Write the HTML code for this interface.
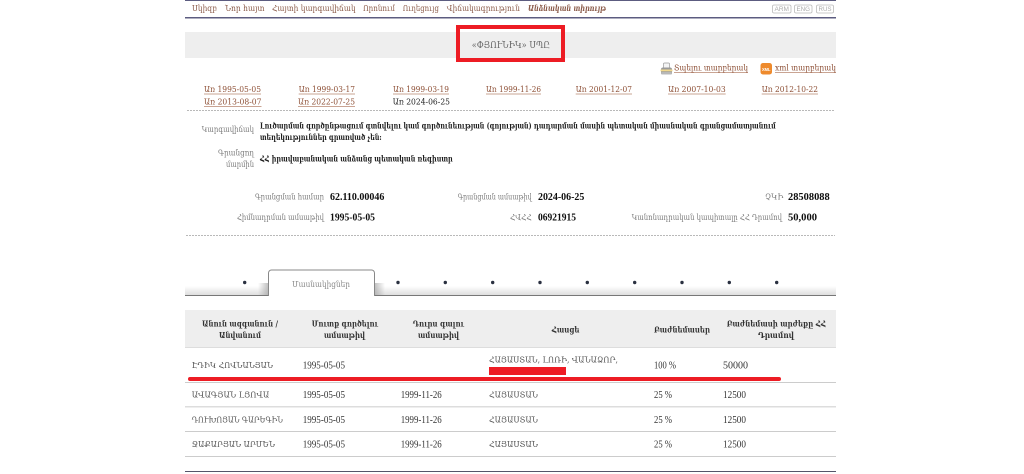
<!DOCTYPE html>
<html lang="hy"><head><meta charset="utf-8"><title>ՓՅՈՒՆԻԿ ՍՊԸ</title>
<style>
html,body{margin:0;padding:0;background:#fff;width:1024px;height:474px;overflow:hidden}
svg{display:block}
text{font-family:"DejaVu Serif","Liberation Serif",serif;font-size:8.5px;fill:#222}
.n{fill:#8a5a48}.l{fill:#8d4f35}.g{fill:#7b7b7b}.b{font-weight:bold;fill:#1d1d1d}
.d{font-family:"Liberation Serif",serif;font-size:10px;fill:#333}
.v{font-family:"Liberation Serif",serif;font-weight:bold;font-size:10.5px;fill:#111}
.h{font-weight:bold;fill:#333}.c{fill:#555}
.s{font-family:"Liberation Sans",sans-serif;font-size:6px;fill:#aaa}
</style></head><body>
<svg width="1024" height="474" viewBox="0 0 1024 474" xmlns="http://www.w3.org/2000/svg">
<defs>
<linearGradient id="st" x1="0" y1="0" x2="0" y2="1"><stop offset="0" stop-color="#fff"/><stop offset="1" stop-color="#dedede"/></linearGradient>
<linearGradient id="sl" x1="0" y1="0" x2="1" y2="0"><stop offset="0" stop-color="#999" stop-opacity="0"/><stop offset="1" stop-color="#999" stop-opacity=".6"/></linearGradient>
<linearGradient id="sr" x1="0" y1="0" x2="1" y2="0"><stop offset="0" stop-color="#999" stop-opacity=".6"/><stop offset="1" stop-color="#999" stop-opacity="0"/></linearGradient>
<filter id="bl" x="0" y="0" width="100%" height="100%"><feGaussianBlur stdDeviation="0.3"/></filter>
</defs>
<rect x="185" y="0" width="651" height="1" fill="#5c5c80"/>
<rect x="185" y="17" width="651" height="1.5" fill="#5c5c80"/>
<rect x="185" y="32" width="651" height="26" fill="#eee"/>

<g fill="none" stroke="#bbb" stroke-width="0.8">
<rect x="772.5" y="5" width="18.5" height="8" rx="1.5"/><rect x="794.5" y="5" width="17.5" height="8" rx="1.5"/><rect x="816.5" y="5" width="17" height="8" rx="1.5"/>
</g>

<g stroke="#b9b9b9" stroke-width="1" stroke-dasharray="2 1">
<line x1="187" y1="110.5" x2="835" y2="110.5"/><line x1="186" y1="235.5" x2="835" y2="235.5"/>
</g>

<!-- tab strip -->
<rect x="185" y="286" width="651" height="9" fill="url(#st)"/>
<rect x="258" y="283" width="10" height="12" fill="url(#sl)"/>
<rect x="375" y="283" width="10" height="12" fill="url(#sr)"/>
<rect x="185" y="295" width="651" height="1" fill="#777"/>
<path d="M268.5 296V273a3 3 0 0 1 3-3H371.5a3 3 0 0 1 3 3V296" fill="#fff" stroke="#888" stroke-width="1"/>
<g fill="#2a3040">
<circle cx="244.7" cy="282.5" r="1.7"/><circle cx="398" cy="282.5" r="1.7"/><circle cx="445.3" cy="282.5" r="1.7"/><circle cx="492.7" cy="282.5" r="1.7"/><circle cx="540" cy="282.5" r="1.7"/><circle cx="587.3" cy="282.5" r="1.7"/><circle cx="634.7" cy="282.5" r="1.7"/><circle cx="682" cy="282.5" r="1.7"/><circle cx="729.3" cy="282.5" r="1.7"/><circle cx="776.7" cy="282.5" r="1.7"/>
</g>

<!-- table -->
<rect x="185" y="310" width="651" height="37" fill="#eee"/>
<rect x="185" y="347" width="651" height="1" fill="#ddd"/>
<rect x="185" y="382" width="651" height="1" fill="#ccc"/>
<rect x="185" y="406" width="651" height="1.5" fill="#ddd"/>
<rect x="185" y="431" width="651" height="1" fill="#ccc"/>
<rect x="185" y="456" width="651" height="1" fill="#ccc"/>
<rect x="185" y="471" width="651" height="1" fill="#55556a"/>

<!-- printer icon -->
<path d="M663.5 68V64a1 1 0 0 1 1-1h4a1 1 0 0 1 1 1v4z" fill="#f4f4f4" stroke="#999" stroke-width="0.7"/>
<path d="M661 74V69.5Q661 67.5 663 67.5H670Q672 67.5 672 69.5V74z" fill="#9a9a9a"/>
<rect x="660.5" y="69.5" width="12" height="1.8" fill="#f2d98e"/>
<rect x="661" y="72" width="11" height="2.5" rx="1" fill="#b8b8b8"/>
<!-- xml icon -->
<rect x="760.5" y="63" width="11.5" height="11.5" rx="2.5" fill="#ee8a2c"/>
<text x="762" y="71" textLength="8.5" lengthAdjust="spacingAndGlyphs" style="font-family:'Liberation Sans',sans-serif;font-size:4.5px;font-weight:bold;fill:#fff">XML</text>

<!-- link underlines -->
<g fill="#c9a493">
<rect x="674" y="72" width="74" height="1"/><rect x="775" y="72" width="61" height="1"/>
<rect x="204" y="93.5" width="57" height="1"/><rect x="298.7" y="93.5" width="56.3" height="1"/><rect x="393" y="93.5" width="56" height="1"/><rect x="486" y="93.5" width="55" height="1"/><rect x="575.7" y="93.5" width="56.3" height="1"/><rect x="668" y="93.5" width="57.7" height="1"/><rect x="761.7" y="93.5" width="56.3" height="1"/>
<rect x="204" y="106" width="57.5" height="1"/><rect x="298" y="106" width="57" height="1"/>
</g>

<g filter="url(#bl)">
<!-- nav -->
<text class="n" x="192" y="11" textLength="25" lengthAdjust="spacingAndGlyphs">Սկիզբ</text>
<text class="n" x="225" y="11" textLength="39.5" lengthAdjust="spacingAndGlyphs">Նոր հայտ</text>
<text class="n" x="272" y="11" textLength="83.7" lengthAdjust="spacingAndGlyphs">Հայտի կարգավիճակ</text>
<text class="n" x="363" y="11" textLength="32" lengthAdjust="spacingAndGlyphs">Որոնում</text>
<text class="n" x="402.7" y="11" textLength="36.3" lengthAdjust="spacingAndGlyphs">Ուղեցույց</text>
<text class="n" x="446.7" y="11" textLength="73.3" lengthAdjust="spacingAndGlyphs">Վիճակագրություն</text>
<text class="n" x="528" y="11" textLength="78" lengthAdjust="spacingAndGlyphs" style="font-style:italic;font-weight:bold">Անձնական տիրույթ</text>
<text class="s" x="774.5" y="11" textLength="14.5" lengthAdjust="spacingAndGlyphs">ARM</text>
<text class="s" x="796.5" y="11" textLength="13.5" lengthAdjust="spacingAndGlyphs">ENG</text>
<text class="s" x="818.5" y="11" textLength="13" lengthAdjust="spacingAndGlyphs">RUS</text>

<text x="471.7" y="48" textLength="78.3" lengthAdjust="spacingAndGlyphs" style="fill:#666;font-size:9.5px">«ՓՅՈՒՆԻԿ» ՍՊԸ</text>

<text class="l" x="674" y="70.5" textLength="74" lengthAdjust="spacingAndGlyphs">Տպելու տարբերակ</text>
<text class="l" x="775" y="70.5" textLength="61" lengthAdjust="spacingAndGlyphs">xml տարբերակ</text>

<!-- dates -->
<text class="l" x="204" y="92" textLength="57" lengthAdjust="spacingAndGlyphs">Առ 1995-05-05</text>
<text class="l" x="298.7" y="92" textLength="56.3" lengthAdjust="spacingAndGlyphs">Առ 1999-03-17</text>
<text class="l" x="393" y="92" textLength="56" lengthAdjust="spacingAndGlyphs">Առ 1999-03-19</text>
<text class="l" x="486" y="92" textLength="55" lengthAdjust="spacingAndGlyphs">Առ 1999-11-26</text>
<text class="l" x="575.7" y="92" textLength="56.3" lengthAdjust="spacingAndGlyphs">Առ 2001-12-07</text>
<text class="l" x="668" y="92" textLength="57.7" lengthAdjust="spacingAndGlyphs">Առ 2007-10-03</text>
<text class="l" x="761.7" y="92" textLength="56.3" lengthAdjust="spacingAndGlyphs">Առ 2012-10-22</text>
<text class="l" x="204" y="104.5" textLength="57.5" lengthAdjust="spacingAndGlyphs">Առ 2013-08-07</text>
<text class="l" x="298" y="104.5" textLength="57" lengthAdjust="spacingAndGlyphs">Առ 2022-07-25</text>
<text x="392.7" y="104.5" textLength="57.3" lengthAdjust="spacingAndGlyphs">Առ 2024-06-25</text>

<!-- details -->
<text class="g" x="201.7" y="132" textLength="52.3" lengthAdjust="spacingAndGlyphs">Կարգավիճակ</text>
<text class="b" x="260" y="128.5" textLength="515.7" lengthAdjust="spacingAndGlyphs">Լուծարման գործընթացում գտնվելու կամ գործունեության (գոյության) դադարման մասին պետական միասնական գրանցամատյանում</text>
<text class="b" x="260" y="140" textLength="121.7" lengthAdjust="spacingAndGlyphs">տեղեկություններ գրառված չեն:</text>
<text class="g" x="218" y="155.7" textLength="36" lengthAdjust="spacingAndGlyphs">Գրանցող</text>
<text class="g" x="226" y="167" textLength="28" lengthAdjust="spacingAndGlyphs">մարմին</text>
<text class="b" x="260" y="161.3" textLength="192.7" lengthAdjust="spacingAndGlyphs">ՀՀ իրավաբանական անձանց պետական ռեգիստր</text>

<text class="g" x="255" y="199.7" textLength="69" lengthAdjust="spacingAndGlyphs">Գրանցման համար</text>
<text class="v" x="330" y="200" textLength="54.3" lengthAdjust="spacingAndGlyphs">62.110.00046</text>
<text class="g" x="457.7" y="199.7" textLength="74" lengthAdjust="spacingAndGlyphs">Գրանցման ամսաթիվ</text>
<text class="v" x="538" y="200" textLength="46.3" lengthAdjust="spacingAndGlyphs">2024-06-25</text>
<text class="g" x="765" y="199.7" textLength="18.3" lengthAdjust="spacingAndGlyphs">ՉԿԻ</text>
<text class="v" x="788" y="200" textLength="41.7" lengthAdjust="spacingAndGlyphs">28508088</text>

<text class="g" x="237" y="220" textLength="87" lengthAdjust="spacingAndGlyphs">Հիմնադրման ամսաթիվ</text>
<text class="v" x="330" y="220.5" textLength="45" lengthAdjust="spacingAndGlyphs">1995-05-05</text>
<text class="g" x="510" y="220" textLength="21.7" lengthAdjust="spacingAndGlyphs">ՀՎՀՀ</text>
<text class="v" x="538" y="220.5" textLength="38" lengthAdjust="spacingAndGlyphs">06921915</text>
<text class="g" x="631.7" y="220" textLength="150.3" lengthAdjust="spacingAndGlyphs">Կանոնադրական կապիտալը ՀՀ Դրամով</text>
<text class="v" x="788" y="220.5" textLength="29" lengthAdjust="spacingAndGlyphs">50,000</text>

<text x="292" y="287" textLength="58" lengthAdjust="spacingAndGlyphs" style="fill:#888">Մասնակիցներ</text>

<!-- table head -->
<text class="h" x="202" y="326.3" textLength="76" lengthAdjust="spacingAndGlyphs">Անուն ազգանուն /</text>
<text class="h" x="219" y="338" textLength="42" lengthAdjust="spacingAndGlyphs">Անվանում</text>
<text class="h" x="311.7" y="326.3" textLength="66.3" lengthAdjust="spacingAndGlyphs">Մուտք գործելու</text>
<text class="h" x="324" y="338" textLength="41" lengthAdjust="spacingAndGlyphs">ամսաթիվ</text>
<text class="h" x="412.7" y="326.3" textLength="51.3" lengthAdjust="spacingAndGlyphs">Դուրս գալու</text>
<text class="h" x="418" y="338" textLength="41" lengthAdjust="spacingAndGlyphs">ամսաթիվ</text>
<text class="h" x="551.7" y="332.7" textLength="27.8" lengthAdjust="spacingAndGlyphs">Հասցե</text>
<text class="h" x="654" y="332.7" textLength="56" lengthAdjust="spacingAndGlyphs">Բաժնեմասեր</text>
<text class="h" x="726.7" y="326.3" textLength="99.3" lengthAdjust="spacingAndGlyphs">Բաժնեմասի արժեքը ՀՀ</text>
<text class="h" x="758" y="338" textLength="36" lengthAdjust="spacingAndGlyphs">Դրամով</text>

<!-- rows -->
<text class="c" x="191.7" y="368" textLength="81.3" lengthAdjust="spacingAndGlyphs">ԷԴԻԿ ՀՈՎՆԱՆՅԱՆ</text>
<text class="d" x="302.7" y="368.5" textLength="42.3" lengthAdjust="spacingAndGlyphs">1995-05-05</text>
<text class="c" x="489" y="362.3" textLength="129" lengthAdjust="spacingAndGlyphs">ՀԱՅԱՍՏԱՆ, ԼՈՌԻ, ՎԱՆԱՁՈՐ,</text>
<text class="d" x="654" y="368.5" textLength="22" lengthAdjust="spacingAndGlyphs">100 %</text>
<text class="d" x="723" y="368.5" textLength="25" lengthAdjust="spacingAndGlyphs">50000</text>

<text class="c" x="191.7" y="397.7" textLength="77.6" lengthAdjust="spacingAndGlyphs">ԱՎԱԳՅԱՆ ԼՅՈՎԱ</text>
<text class="d" x="302.7" y="398" textLength="42.3" lengthAdjust="spacingAndGlyphs">1995-05-05</text>
<text class="d" x="400.7" y="398" textLength="41" lengthAdjust="spacingAndGlyphs">1999-11-26</text>
<text class="c" x="489" y="397.7" textLength="49" lengthAdjust="spacingAndGlyphs">ՀԱՅԱՍՏԱՆ</text>
<text class="d" x="654" y="398" textLength="18" lengthAdjust="spacingAndGlyphs">25 %</text>
<text class="d" x="723" y="398" textLength="23" lengthAdjust="spacingAndGlyphs">12500</text>

<text class="c" x="191.7" y="422.5" textLength="91.3" lengthAdjust="spacingAndGlyphs">ԴՈՒԽՈՅԱՆ ԳԱՐԵԳԻՆ</text>
<text class="d" x="302.7" y="422.8" textLength="42.3" lengthAdjust="spacingAndGlyphs">1995-05-05</text>
<text class="d" x="400.7" y="422.8" textLength="41" lengthAdjust="spacingAndGlyphs">1999-11-26</text>
<text class="c" x="489" y="422.5" textLength="49" lengthAdjust="spacingAndGlyphs">ՀԱՅԱՍՏԱՆ</text>
<text class="d" x="654" y="422.8" textLength="18" lengthAdjust="spacingAndGlyphs">25 %</text>
<text class="d" x="723" y="422.8" textLength="23" lengthAdjust="spacingAndGlyphs">12500</text>

<text class="c" x="191.7" y="447" textLength="83.3" lengthAdjust="spacingAndGlyphs">ՋԱՔԱՐՅԱՆ ԱՐՄԵՆ</text>
<text class="d" x="302.7" y="447.3" textLength="42.3" lengthAdjust="spacingAndGlyphs">1995-05-05</text>
<text class="d" x="400.7" y="447.3" textLength="41" lengthAdjust="spacingAndGlyphs">1999-11-26</text>
<text class="c" x="489" y="447" textLength="49" lengthAdjust="spacingAndGlyphs">ՀԱՅԱՍՏԱՆ</text>
<text class="d" x="654" y="447.3" textLength="18" lengthAdjust="spacingAndGlyphs">25 %</text>
<text class="d" x="723" y="447.3" textLength="23" lengthAdjust="spacingAndGlyphs">12500</text>
</g>

<!-- red annotations -->
<rect x="458" y="27" width="105" height="33" fill="none" stroke="#ed1c24" stroke-width="4"/>
<rect x="489" y="367" width="77" height="8" fill="#ed1c24"/>
<rect x="188" y="377" width="593" height="4" rx="2" fill="#ed1c24"/>
</svg>
</body></html>
